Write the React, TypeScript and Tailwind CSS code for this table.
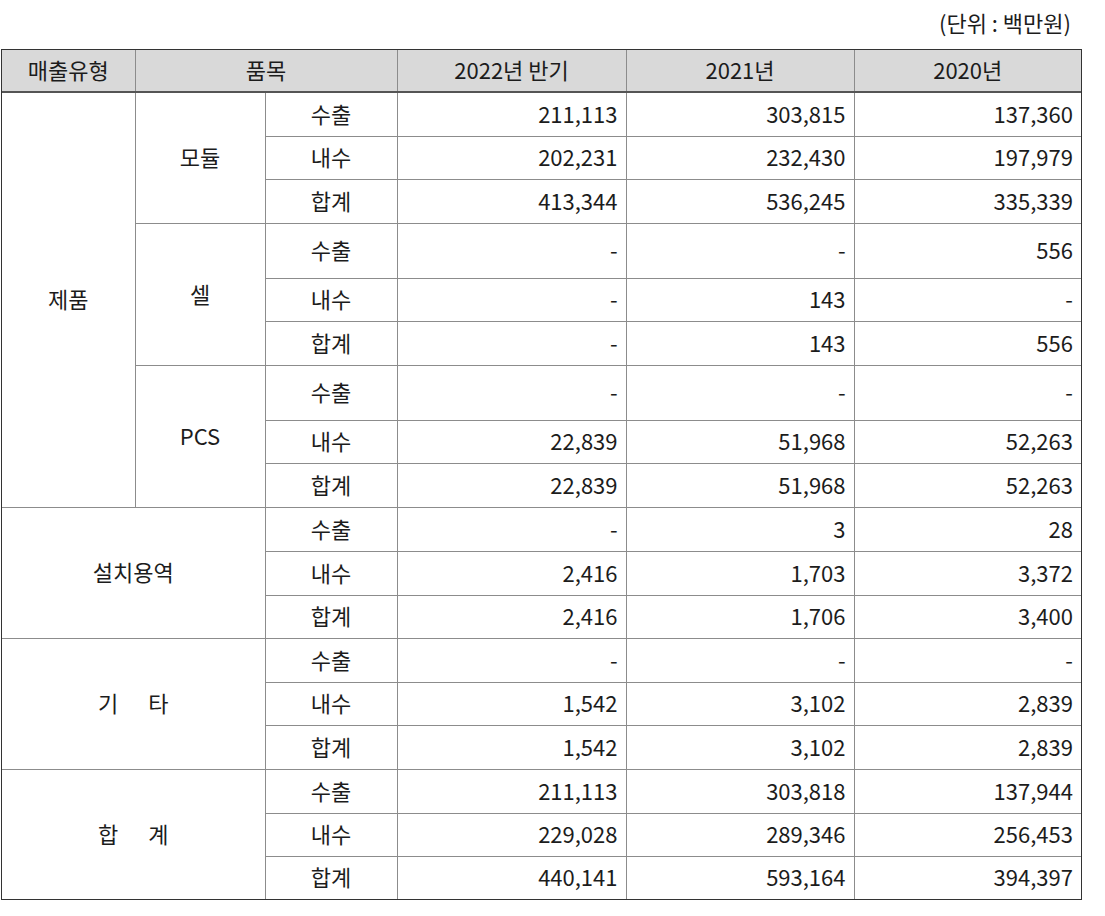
import React from "react";

type Row = { item: string; a: string; b: string; c: string; h: string };

const font = { fontFamily: '"Noto Sans CJK KR", "Noto Sans", sans-serif' };

const cell = "border border-[#8c8c8c] pt-0 pl-0 pb-[3px]";
const num = `${cell} text-right pr-[8px]`;
const ctr = `${cell} text-center pr-0`;

export default function App() {
  const product = [
    {
      name: "모듈",
      rows: [
        { item: "수출", a: "211,113", b: "303,815", c: "137,360", h: "h-[44px]" },
        { item: "내수", a: "202,231", b: "232,430", c: "197,979", h: "h-[43px]" },
        { item: "합계", a: "413,344", b: "536,245", c: "335,339", h: "h-[44px]" },
      ],
    },
    {
      name: "셀",
      rows: [
        { item: "수출", a: "-", b: "-", c: "556", h: "h-[55px]" },
        { item: "내수", a: "-", b: "143", c: "-", h: "h-[43px]" },
        { item: "합계", a: "-", b: "143", c: "556", h: "h-[44px]" },
      ],
    },
    {
      name: "PCS",
      rows: [
        { item: "수출", a: "-", b: "-", c: "-", h: "h-[55px]" },
        { item: "내수", a: "22,839", b: "51,968", c: "52,263", h: "h-[43px]" },
        { item: "합계", a: "22,839", b: "51,968", c: "52,263", h: "h-[44px]" },
      ],
    },
  ];

  const others: { label: React.ReactNode; rows: Row[] }[] = [
    {
      label: "설치용역",
      rows: [
        { item: "수출", a: "-", b: "3", c: "28", h: "h-[44px]" },
        { item: "내수", a: "2,416", b: "1,703", c: "3,372", h: "h-[44px]" },
        { item: "합계", a: "2,416", b: "1,706", c: "3,400", h: "h-[43px]" },
      ],
    },
    {
      label: (
        <>
          <span className="mr-[30px]">기</span>타
        </>
      ),
      rows: [
        { item: "수출", a: "-", b: "-", c: "-", h: "h-[44px]" },
        { item: "내수", a: "1,542", b: "3,102", c: "2,839", h: "h-[43px]" },
        { item: "합계", a: "1,542", b: "3,102", c: "2,839", h: "h-[44px]" },
      ],
    },
    {
      label: (
        <>
          <span className="mr-[30px]">합</span>계
        </>
      ),
      rows: [
        { item: "수출", a: "211,113", b: "303,818", c: "137,944", h: "h-[44px]" },
        { item: "내수", a: "229,028", b: "289,346", c: "256,453", h: "h-[43px]" },
        { item: "합계", a: "440,141", b: "593,164", c: "394,397", h: "h-[43px]" },
      ],
    },
  ];

  return (
    <div className="w-[1105px] h-[916px] bg-white text-[#1c1c1c] text-[22px] leading-none" style={font}>
      <div className="h-[49px] flex items-center justify-end pr-[34px] pb-[6px]">(단위 : 백만원)</div>
      <div className="ml-[1px] w-[1081px] border border-[#333]">
        <table className="w-full border-collapse border-hidden table-fixed">
          <colgroup>
            <col className="w-[133px]" />
            <col className="w-[130px]" />
            <col className="w-[132px]" />
            <col className="w-[229px]" />
            <col className="w-[228px]" />
            <col />
          </colgroup>
          <thead>
            <tr className="h-[42px] bg-[#d9d9d9]">
              <th className={`${ctr} font-normal border-b-2 border-b-[#555]`}>매출유형</th>
              <th colSpan={2} className={`${ctr} font-normal border-b-2 border-b-[#555]`}>품목</th>
              <th className={`${ctr} font-normal border-b-2 border-b-[#555]`}>2022년 반기</th>
              <th className={`${ctr} font-normal border-b-2 border-b-[#555]`}>2021년</th>
              <th className={`${ctr} font-normal border-b-2 border-b-[#555]`}>2020년</th>
            </tr>
          </thead>
          <tbody>
            {product.map((g, gi) =>
              g.rows.map((r, ri) => (
                <tr key={`p${gi}${ri}`} className={r.h}>
                  {gi === 0 && ri === 0 && (
                    <td rowSpan={9} className={ctr}>
                      제품
                    </td>
                  )}
                  {ri === 0 && (
                    <td rowSpan={3} className={ctr}>
                      {g.name}
                    </td>
                  )}
                  <td className={ctr}>{r.item}</td>
                  <td className={num}>{r.a}</td>
                  <td className={num}>{r.b}</td>
                  <td className={num}>{r.c}</td>
                </tr>
              ))
            )}
            {others.map((g, gi) =>
              g.rows.map((r, ri) => (
                <tr key={`o${gi}${ri}`} className={r.h}>
                  {ri === 0 && (
                    <td rowSpan={3} colSpan={2} className={ctr}>
                      {g.label}
                    </td>
                  )}
                  <td className={ctr}>{r.item}</td>
                  <td className={num}>{r.a}</td>
                  <td className={num}>{r.b}</td>
                  <td className={num}>{r.c}</td>
                </tr>
              ))
            )}
          </tbody>
        </table>
      </div>
    </div>
  );
}
